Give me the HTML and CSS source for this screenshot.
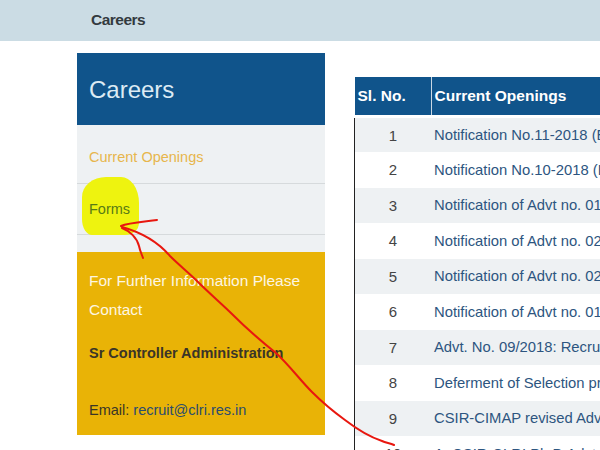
FILE: index.html
```html
<!DOCTYPE html>
<html>
<head>
<meta charset="utf-8">
<link rel="stylesheet" href="styles.css">
</head>
<body>
<div class="page">
  <div class="topbar"><span class="crumb">Careers</span></div>
  <div class="main">
    <aside class="sidebar">
      <div class="side-head">Careers</div>
      <div class="side-menu">
        <a class="side-link">Current Openings</a>
        <a class="side-link forms"><span class="forms-text">Forms</span></a>
      </div>
      <div class="contact">
        <p class="contact-intro">For Further Information Please Contact</p>
        <p class="contact-name">Sr Controller Administration</p>
        <p class="contact-mail">Email: <a class="mail">recruit@clri.res.in</a></p>
      </div>
    </aside>
    <section class="content">
      <table class="openings">
        <thead>
          <tr><th class="col-no">Sl. No.</th><th class="col-title">Current Openings</th></tr>
        </thead>
        <tbody>
          <tr><td class="num">1</td><td><a>Notification No.11-2018 (E) Recruitment of Scientists</a></td></tr>
          <tr><td class="num">2</td><td><a>Notification No.10-2018 (E) Recruitment of Technical Staff</a></td></tr>
          <tr><td class="num">3</td><td><a>Notification of Advt no. 01/2018 Project staff</a></td></tr>
          <tr><td class="num">4</td><td><a>Notification of Advt no. 02/2018 Project staff</a></td></tr>
          <tr><td class="num">5</td><td><a>Notification of Advt no. 02/2017 Project staff</a></td></tr>
          <tr><td class="num">6</td><td><a>Notification of Advt no. 01/2017 Project staff</a></td></tr>
          <tr><td class="num">7</td><td><a>Advt. No. 09/2018: Recruitment of Project staff</a></td></tr>
          <tr><td class="num">8</td><td><a>Deferment of Selection process</a></td></tr>
          <tr><td class="num">9</td><td><a>CSIR-CIMAP revised Advertisement</a></td></tr>
          <tr><td class="num">10</td><td><a>A. CSIR-CLRI Ph.D Advt for admission</a></td></tr>
        </tbody>
      </table>
    </section>
  </div>
  <svg class="scribble" width="600" height="450" viewBox="0 0 600 450">
    <path d="M121 226 C128 223 142 222 157 220" fill="none" stroke="#e8170f" stroke-width="2" stroke-linecap="round"/>
    <path d="M122 228 C130 231 137 238 139 246 C140 251 142 255 143 258" fill="none" stroke="#e8170f" stroke-width="2" stroke-linecap="round"/>
    <path d="M122 227 C140 232 158 242 170 256 C180 266 188 272 197 281 C210 294 222 304 232 314 C248 330 262 342 276 353 C290 366 300 380 312 392 C324 404 334 412 345 420 C358 430 370 437 382 441 C386 443 390 443 394 445" fill="none" stroke="#e8170f" stroke-width="2" stroke-linecap="round"/>
  </svg>
</div>
</body>
</html>
```
FILE: styles.css
```css
html, body {
  margin: 0;
  padding: 0;
  overflow: hidden;
  background: #ffffff;
}
.page {
  position: relative;
  width: 600px;
  height: 450px;
  overflow: hidden;
  font-family: "Liberation Sans", Arial, sans-serif;
}
.topbar {
  height: 41px;
  background: #cbdce4;
  display: flex;
  align-items: center;
  padding-left: 91px;
}
.crumb {
  font-weight: bold;
  font-size: 15.5px;
  color: #333a3e;
  letter-spacing: -0.5px;
  position: relative;
  top: -1px;
}
.main {
  display: flex;
  align-items: flex-start;
  padding-left: 77px;
}
.sidebar {
  flex: 0 0 248px;
  margin-top: 12px;
  background: #eef1f3;
}
.side-head {
  height: 72px;
  background: #10548b;
  color: #dcebf4;
  font-size: 24px;
  display: flex;
  align-items: center;
  padding-left: 12px;
  padding-top: 2px;
  box-sizing: border-box;
}
.side-menu {
  display: flex;
  flex-direction: column;
  padding-bottom: 17px;
}
.side-link {
  display: flex;
  align-items: center;
  padding-left: 12px;
  font-size: 14.5px;
  border-bottom: 1px solid #d6dadc;
  box-sizing: border-box;
}
.side-link:first-child {
  height: 59px;
  padding-top: 5px;
  color: #e7b64c;
}
.forms {
  height: 51px;
  position: relative;
  color: #587b16;
}
.forms::before {
  content: "";
  position: absolute;
  left: 5px;
  top: -7px;
  width: 57px;
  height: 58px;
  background: #eef30f;
  border-radius: 24px 18px 14px 10px / 20px 26px 12px 16px;
}
.forms-text {
  position: relative;
}
.contact {
  background: #e9b306;
  padding: 14px 12px 16px 12px;
  height: 183px;
  box-sizing: border-box;
}
.contact p {
  margin: 0;
}
.contact-intro {
  color: #fdf6e2;
  font-size: 15.5px;
  line-height: 29px;
}
.contact-name {
  font-weight: bold;
  font-size: 14.5px;
  color: #3a3528;
  margin-top: 21px !important;
}
.contact-mail {
  font-size: 14.5px;
  color: #3a3528;
  margin-top: 41px !important;
}
.mail {
  color: #2b4c6e;
}
.content {
  margin-left: 29px;
  margin-top: 36px;
}
.openings {
  border-collapse: collapse;
  width: 560px;
  font-size: 14.8px;
}
.openings th {
  background: #10548b;
  color: #ffffff;
  font-weight: bold;
  font-size: 15.5px;
  height: 38px;
  text-align: left;
  padding: 0 3px;
}
.openings th.col-no {
  width: 70px;
  border-right: 1px solid #c9d7e3;
}
.openings tbody tr {
  height: 35.5px;
}
.openings tbody tr:nth-child(odd) {
  background: #eef1f3;
}
.openings td {
  padding: 0 3px;
  white-space: nowrap;
  color: #2d5580;
}
.openings td.num {
  text-align: center;
  color: #444444;
  font-size: 15px;
  border-left: 1px solid #222222;
}
.openings tbody tr:first-child td {
  border-top: 3px solid #ffffff;
}
.scribble {
  position: absolute;
  left: 0;
  top: 0;
  pointer-events: none;
}
```
